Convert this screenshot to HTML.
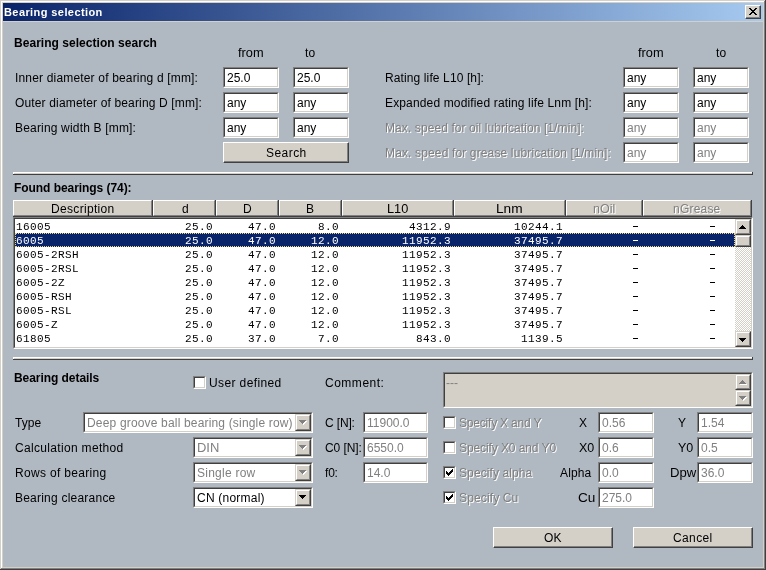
<!DOCTYPE html>
<html><head><meta charset="utf-8"><title>Bearing selection</title><style>
*{margin:0;padding:0;box-sizing:content-box}
html,body{width:766px;height:570px;overflow:hidden;background:#d4d0c8}
body{position:relative;font-family:"Liberation Sans",sans-serif}
body div, body svg{position:absolute}
.t,.b,.tv,.ht,.m,.title{filter:grayscale(1)}
.t{font-size:12px;line-height:14px;white-space:pre;color:#000}
.b{font-size:12px;line-height:14px;white-space:pre;color:#000;font-weight:bold}
.title{font-size:11px;line-height:14px;white-space:pre;color:#fff;font-weight:bold}
.dis{color:#808080 !important;text-shadow:1px 1px 0 #fff}
.dis2{color:#808080 !important}
.tv{font-size:12px;line-height:16px;white-space:pre;color:#000}
.sk{border-style:solid;border-width:1px;border-color:#808080 #fff #fff #808080}
.ski{position:relative !important;border-style:solid;border-width:1px;border-color:#404040 #d4d0c8 #d4d0c8 #404040}
.rs{border-style:solid;border-width:1px;border-color:#fff #404040 #404040 #fff;background:#d4d0c8}
.rsi{position:relative !important;border-style:solid;border-width:0 1px 1px 0;border-color:#808080}
.sb{border-style:solid;border-width:1px;border-color:#d4d0c8 #404040 #404040 #d4d0c8;background:#d4d0c8}
.sbi{position:relative !important;border-style:solid;border-width:1px;border-color:#fff #808080 #808080 #fff}
.hc{border-style:solid;border-width:1px 1px 1px 1px;border-color:#fff #808080 #808080 #fff;background:#d4d0c8}
.ht{font-size:12px;line-height:14px;white-space:pre;text-align:center;color:#000}
.vp{border-style:solid;border-width:2px 0 0 2px;border-color:#404040 transparent transparent #404040;background:#fff;box-shadow:1px 1px 0 #fff, inset -1px -1px 0 #d4d0c8}
.m{font-family:"Liberation Mono",monospace;font-size:11px;line-height:14px;letter-spacing:0.4px;white-space:pre;color:#000}
.m.sel{color:#fff}
.selrow{background:#0a246a;border:1px dotted #f0d878}
</style></head>
<body>
<div style="left:0px;top:0px;width:766px;height:570px;background:#d4d0c8"></div>
<div style="left:0px;top:569px;width:766px;height:1px;background:#404040"></div>
<div style="left:765px;top:0px;width:1px;height:570px;background:#404040"></div>
<div style="left:1px;top:568px;width:764px;height:1px;background:#808080"></div>
<div style="left:764px;top:1px;width:1px;height:568px;background:#808080"></div>
<div style="left:1px;top:1px;width:763px;height:1px;background:#fff"></div>
<div style="left:1px;top:1px;width:1px;height:567px;background:#fff"></div>
<div style="left:3px;top:3px;width:760px;height:18px;background:linear-gradient(to right,#0a246a,#a6caf0)"></div>
<div class="title" style="left:4.00px;top:5px;letter-spacing:0.414px;">Bearing selection</div>
<div class="rs" style="left:745px;top:5px;width:14px;height:12px;background:#d4d0c8"><div class="rsi" style="width:13px;height:11px;"></div></div>
<svg style="left:749px;top:8px" width="8" height="7" shape-rendering="crispEdges"><g fill="#000"><rect x="0" y="0" width="1" height="1"/><rect x="1" y="0" width="1" height="1"/><rect x="6" y="0" width="1" height="1"/><rect x="7" y="0" width="1" height="1"/><rect x="1" y="1" width="1" height="1"/><rect x="2" y="1" width="1" height="1"/><rect x="5" y="1" width="1" height="1"/><rect x="6" y="1" width="1" height="1"/><rect x="2" y="2" width="1" height="1"/><rect x="3" y="2" width="1" height="1"/><rect x="4" y="2" width="1" height="1"/><rect x="5" y="2" width="1" height="1"/><rect x="3" y="3" width="1" height="1"/><rect x="4" y="3" width="1" height="1"/><rect x="2" y="4" width="1" height="1"/><rect x="3" y="4" width="1" height="1"/><rect x="4" y="4" width="1" height="1"/><rect x="5" y="4" width="1" height="1"/><rect x="1" y="5" width="1" height="1"/><rect x="2" y="5" width="1" height="1"/><rect x="5" y="5" width="1" height="1"/><rect x="6" y="5" width="1" height="1"/><rect x="0" y="6" width="1" height="1"/><rect x="1" y="6" width="1" height="1"/><rect x="6" y="6" width="1" height="1"/><rect x="7" y="6" width="1" height="1"/></g></svg>
<div style="left:3px;top:22px;width:760px;height:545px;background:#b0b8c1"></div>
<div class="b" style="left:14.00px;top:36px;letter-spacing:0.038px;">Bearing selection search</div>
<div class="t" style="left:238.00px;top:46px;transform:scaleX(1.0665);transform-origin:0 0;">from</div>
<div class="t" style="left:305.00px;top:46px;letter-spacing:0.266px;">to</div>
<div class="t" style="left:638.00px;top:46px;transform:scaleX(1.0665);transform-origin:0 0;">from</div>
<div class="t" style="left:716.00px;top:46px;letter-spacing:0.266px;">to</div>
<div class="t" style="left:15.00px;top:71px;letter-spacing:0.172px;">Inner diameter of bearing d [mm]:</div>
<div class="sk" style="left:223px;top:67px;width:54px;height:19px;"><div class="ski" style="width:52px;height:17px;background:#fff"></div></div>
<div class="tv" style="left:227px;top:70px">25.0</div>
<div class="sk" style="left:293px;top:67px;width:54px;height:19px;"><div class="ski" style="width:52px;height:17px;background:#fff"></div></div>
<div class="tv" style="left:297px;top:70px">25.0</div>
<div class="t" style="left:15.00px;top:96px;letter-spacing:0.152px;">Outer diameter of bearing D [mm]:</div>
<div class="sk" style="left:223px;top:92px;width:54px;height:19px;"><div class="ski" style="width:52px;height:17px;background:#fff"></div></div>
<div class="tv" style="left:227px;top:95px">any</div>
<div class="sk" style="left:293px;top:92px;width:54px;height:19px;"><div class="ski" style="width:52px;height:17px;background:#fff"></div></div>
<div class="tv" style="left:297px;top:95px">any</div>
<div class="t" style="left:15.00px;top:121px;letter-spacing:0.178px;">Bearing width B [mm]:</div>
<div class="sk" style="left:223px;top:117px;width:54px;height:19px;"><div class="ski" style="width:52px;height:17px;background:#fff"></div></div>
<div class="tv" style="left:227px;top:120px">any</div>
<div class="sk" style="left:293px;top:117px;width:54px;height:19px;"><div class="ski" style="width:52px;height:17px;background:#fff"></div></div>
<div class="tv" style="left:297px;top:120px">any</div>
<div class="rs" style="left:223px;top:142px;width:124px;height:19px;"><div class="rsi" style="width:123px;height:18px;"></div></div>
<div class="t" style="left:266.00px;top:146px;letter-spacing:0.450px;">Search</div>
<div class="t" style="left:385.00px;top:71px;letter-spacing:0.116px;">Rating life L10 [h]:</div>
<div class="sk" style="left:623px;top:67px;width:54px;height:19px;"><div class="ski" style="width:52px;height:17px;background:#fff"></div></div>
<div class="tv" style="left:627px;top:70px">any</div>
<div class="sk" style="left:693px;top:67px;width:54px;height:19px;"><div class="ski" style="width:52px;height:17px;background:#fff"></div></div>
<div class="tv" style="left:697px;top:70px">any</div>
<div class="t" style="left:385.00px;top:96px;letter-spacing:0.148px;">Expanded modified rating life Lnm [h]:</div>
<div class="sk" style="left:623px;top:92px;width:54px;height:19px;"><div class="ski" style="width:52px;height:17px;background:#fff"></div></div>
<div class="tv" style="left:627px;top:95px">any</div>
<div class="sk" style="left:693px;top:92px;width:54px;height:19px;"><div class="ski" style="width:52px;height:17px;background:#fff"></div></div>
<div class="tv" style="left:697px;top:95px">any</div>
<div class="t dis" style="left:385.00px;top:121px;letter-spacing:0.092px;">Max. speed for oil lubrication [1/min]:</div>
<div class="sk" style="left:623px;top:117px;width:54px;height:19px;"><div class="ski" style="width:52px;height:17px;background:#fff"></div></div>
<div class="tv dis2" style="left:627px;top:120px">any</div>
<div class="sk" style="left:693px;top:117px;width:54px;height:19px;"><div class="ski" style="width:52px;height:17px;background:#fff"></div></div>
<div class="tv dis2" style="left:697px;top:120px">any</div>
<div class="t dis" style="left:385.00px;top:146px;letter-spacing:0.142px;">Max. speed for grease lubrication [1/min]:</div>
<div class="sk" style="left:623px;top:142px;width:54px;height:19px;"><div class="ski" style="width:52px;height:17px;background:#fff"></div></div>
<div class="tv dis2" style="left:627px;top:145px">any</div>
<div class="sk" style="left:693px;top:142px;width:54px;height:19px;"><div class="ski" style="width:52px;height:17px;background:#fff"></div></div>
<div class="tv dis2" style="left:697px;top:145px">any</div>
<div style="left:13px;top:172px;width:740px;height:3px;background:#404040"></div>
<div style="left:13px;top:172px;width:739px;height:2px;background:#d4d0c8"></div>
<div style="left:13px;top:172px;width:739px;height:1px;background:#fff"></div>
<div style="left:13px;top:172px;width:1px;height:2px;background:#fff"></div>
<div class="b" style="left:14.00px;top:181px;letter-spacing:-0.057px;">Found bearings (74):</div>
<div style="left:13px;top:200px;width:739px;height:17px;background:#404040"></div>
<div class="hc" style="left:13px;top:200px;width:137px;height:14px;"></div>
<div class="hc" style="left:153px;top:200px;width:60px;height:14px;"></div>
<div class="hc" style="left:216px;top:200px;width:60px;height:14px;"></div>
<div class="hc" style="left:279px;top:200px;width:60px;height:14px;"></div>
<div class="hc" style="left:342px;top:200px;width:109px;height:14px;"></div>
<div class="hc" style="left:454px;top:200px;width:109px;height:14px;"></div>
<div class="hc" style="left:566px;top:200px;width:74px;height:14px;"></div>
<div class="hc" style="left:643px;top:200px;width:106px;height:14px;"></div>
<div class="ht" style="left:51.00px;top:202px;letter-spacing:0.325px;">Description</div>
<div class="ht" style="left:182.00px;top:202px;letter-spacing:0.000px;">d</div>
<div class="ht" style="left:243.00px;top:202px;letter-spacing:0.000px;">D</div>
<div class="ht" style="left:306.00px;top:202px;letter-spacing:0.000px;">B</div>
<div class="ht" style="left:387.00px;top:202px;transform:scaleX(1.0615);transform-origin:0 0;">L10</div>
<div class="ht" style="left:496.00px;top:202px;transform:scaleX(1.1393);transform-origin:0 0;">Lnm</div>
<div class="ht dis" style="left:593.00px;top:202px;transform:scaleX(1.0448);transform-origin:0 0;">nOil</div>
<div class="ht dis" style="left:673.00px;top:202px;letter-spacing:0.208px;">nGrease</div>
<div class="sk" style="left:13px;top:217px;width:738px;height:130px;"><div class="ski" style="width:736px;height:128px;background:#fff"></div></div>
<div class="m" style="left:16px;top:220px">16005</div>
<div class="m" style="left:113px;top:220px;width:100px;text-align:right">25.0</div>
<div class="m" style="left:176px;top:220px;width:100px;text-align:right">47.0</div>
<div class="m" style="left:239px;top:220px;width:100px;text-align:right">8.0</div>
<div class="m" style="left:351px;top:220px;width:100px;text-align:right">4312.9</div>
<div class="m" style="left:463px;top:220px;width:100px;text-align:right">10244.1</div>
<div style="left:633px;top:226px;width:5px;height:1px;background:#000"></div>
<div style="left:710px;top:226px;width:5px;height:1px;background:#000"></div>
<div class="selrow" style="left:15px;top:233px;width:718px;height:12px;"></div>
<div class="m sel" style="left:16px;top:234px">6005</div>
<div class="m sel" style="left:113px;top:234px;width:100px;text-align:right">25.0</div>
<div class="m sel" style="left:176px;top:234px;width:100px;text-align:right">47.0</div>
<div class="m sel" style="left:239px;top:234px;width:100px;text-align:right">12.0</div>
<div class="m sel" style="left:351px;top:234px;width:100px;text-align:right">11952.3</div>
<div class="m sel" style="left:463px;top:234px;width:100px;text-align:right">37495.7</div>
<div style="left:633px;top:240px;width:5px;height:1px;background:#fff"></div>
<div style="left:710px;top:240px;width:5px;height:1px;background:#fff"></div>
<div class="m" style="left:16px;top:248px">6005-2RSH</div>
<div class="m" style="left:113px;top:248px;width:100px;text-align:right">25.0</div>
<div class="m" style="left:176px;top:248px;width:100px;text-align:right">47.0</div>
<div class="m" style="left:239px;top:248px;width:100px;text-align:right">12.0</div>
<div class="m" style="left:351px;top:248px;width:100px;text-align:right">11952.3</div>
<div class="m" style="left:463px;top:248px;width:100px;text-align:right">37495.7</div>
<div style="left:633px;top:254px;width:5px;height:1px;background:#000"></div>
<div style="left:710px;top:254px;width:5px;height:1px;background:#000"></div>
<div class="m" style="left:16px;top:262px">6005-2RSL</div>
<div class="m" style="left:113px;top:262px;width:100px;text-align:right">25.0</div>
<div class="m" style="left:176px;top:262px;width:100px;text-align:right">47.0</div>
<div class="m" style="left:239px;top:262px;width:100px;text-align:right">12.0</div>
<div class="m" style="left:351px;top:262px;width:100px;text-align:right">11952.3</div>
<div class="m" style="left:463px;top:262px;width:100px;text-align:right">37495.7</div>
<div style="left:633px;top:268px;width:5px;height:1px;background:#000"></div>
<div style="left:710px;top:268px;width:5px;height:1px;background:#000"></div>
<div class="m" style="left:16px;top:276px">6005-2Z</div>
<div class="m" style="left:113px;top:276px;width:100px;text-align:right">25.0</div>
<div class="m" style="left:176px;top:276px;width:100px;text-align:right">47.0</div>
<div class="m" style="left:239px;top:276px;width:100px;text-align:right">12.0</div>
<div class="m" style="left:351px;top:276px;width:100px;text-align:right">11952.3</div>
<div class="m" style="left:463px;top:276px;width:100px;text-align:right">37495.7</div>
<div style="left:633px;top:282px;width:5px;height:1px;background:#000"></div>
<div style="left:710px;top:282px;width:5px;height:1px;background:#000"></div>
<div class="m" style="left:16px;top:290px">6005-RSH</div>
<div class="m" style="left:113px;top:290px;width:100px;text-align:right">25.0</div>
<div class="m" style="left:176px;top:290px;width:100px;text-align:right">47.0</div>
<div class="m" style="left:239px;top:290px;width:100px;text-align:right">12.0</div>
<div class="m" style="left:351px;top:290px;width:100px;text-align:right">11952.3</div>
<div class="m" style="left:463px;top:290px;width:100px;text-align:right">37495.7</div>
<div style="left:633px;top:296px;width:5px;height:1px;background:#000"></div>
<div style="left:710px;top:296px;width:5px;height:1px;background:#000"></div>
<div class="m" style="left:16px;top:304px">6005-RSL</div>
<div class="m" style="left:113px;top:304px;width:100px;text-align:right">25.0</div>
<div class="m" style="left:176px;top:304px;width:100px;text-align:right">47.0</div>
<div class="m" style="left:239px;top:304px;width:100px;text-align:right">12.0</div>
<div class="m" style="left:351px;top:304px;width:100px;text-align:right">11952.3</div>
<div class="m" style="left:463px;top:304px;width:100px;text-align:right">37495.7</div>
<div style="left:633px;top:310px;width:5px;height:1px;background:#000"></div>
<div style="left:710px;top:310px;width:5px;height:1px;background:#000"></div>
<div class="m" style="left:16px;top:318px">6005-Z</div>
<div class="m" style="left:113px;top:318px;width:100px;text-align:right">25.0</div>
<div class="m" style="left:176px;top:318px;width:100px;text-align:right">47.0</div>
<div class="m" style="left:239px;top:318px;width:100px;text-align:right">12.0</div>
<div class="m" style="left:351px;top:318px;width:100px;text-align:right">11952.3</div>
<div class="m" style="left:463px;top:318px;width:100px;text-align:right">37495.7</div>
<div style="left:633px;top:324px;width:5px;height:1px;background:#000"></div>
<div style="left:710px;top:324px;width:5px;height:1px;background:#000"></div>
<div class="m" style="left:16px;top:332px">61805</div>
<div class="m" style="left:113px;top:332px;width:100px;text-align:right">25.0</div>
<div class="m" style="left:176px;top:332px;width:100px;text-align:right">37.0</div>
<div class="m" style="left:239px;top:332px;width:100px;text-align:right">7.0</div>
<div class="m" style="left:351px;top:332px;width:100px;text-align:right">843.0</div>
<div class="m" style="left:463px;top:332px;width:100px;text-align:right">1139.5</div>
<div style="left:633px;top:338px;width:5px;height:1px;background:#000"></div>
<div style="left:710px;top:338px;width:5px;height:1px;background:#000"></div>
<div style="left:735px;top:219px;width:16px;height:128px;background:repeating-conic-gradient(#d4d0c8 0 25%,#fff 0 50%) 0 0/2px 2px"></div>
<div class="sb" style="left:735px;top:219px;width:14px;height:14px;"><div class="sbi" style="width:12px;height:12px;"></div></div>
<svg style="left:739px;top:225px" width="9" height="6" shape-rendering="crispEdges"><g fill="#000"><rect x="3" y="0" width="1" height="1"/><rect x="2" y="1" width="3" height="1"/><rect x="1" y="2" width="5" height="1"/><rect x="0" y="3" width="7" height="1"/></g></svg>
<div class="sb" style="left:735px;top:235px;width:14px;height:10px;"><div class="sbi" style="width:12px;height:8px;"></div></div>
<div class="sb" style="left:735px;top:331px;width:14px;height:14px;"><div class="sbi" style="width:12px;height:12px;"></div></div>
<svg style="left:739px;top:338px" width="9" height="6" shape-rendering="crispEdges"><g fill="#000"><rect x="0" y="0" width="7" height="1"/><rect x="1" y="1" width="5" height="1"/><rect x="2" y="2" width="3" height="1"/><rect x="3" y="3" width="1" height="1"/></g></svg>
<div style="left:13px;top:357px;width:740px;height:3px;background:#404040"></div>
<div style="left:13px;top:357px;width:739px;height:2px;background:#d4d0c8"></div>
<div style="left:13px;top:357px;width:739px;height:1px;background:#fff"></div>
<div style="left:13px;top:357px;width:1px;height:2px;background:#fff"></div>
<div class="b" style="left:14.00px;top:371px;letter-spacing:-0.054px;">Bearing details</div>
<div class="sk" style="left:193px;top:376px;width:11px;height:11px;"><div class="ski" style="width:9px;height:9px;background:#fff"></div></div>
<div class="t" style="left:209.00px;top:376px;letter-spacing:0.385px;">User defined</div>
<div class="t" style="left:325.00px;top:376px;letter-spacing:0.512px;">Comment:</div>
<div class="sk" style="left:443px;top:372px;width:308px;height:34px;"><div class="ski" style="width:306px;height:32px;background:#d4d0c8"></div></div>
<div class="tv dis2" style="left:446px;top:375px">---</div>
<div class="sb" style="left:735px;top:374px;width:14px;height:14px;"><div class="sbi" style="width:12px;height:12px;"></div></div>
<svg style="left:739px;top:380px" width="9" height="6" shape-rendering="crispEdges"><g fill="#fff"><rect x="4" y="1" width="1" height="1"/><rect x="3" y="2" width="3" height="1"/><rect x="2" y="3" width="5" height="1"/><rect x="1" y="4" width="7" height="1"/></g><g fill="#808080"><rect x="3" y="0" width="1" height="1"/><rect x="2" y="1" width="3" height="1"/><rect x="1" y="2" width="5" height="1"/><rect x="0" y="3" width="7" height="1"/></g></svg>
<div class="sb" style="left:735px;top:390px;width:14px;height:14px;"><div class="sbi" style="width:12px;height:12px;"></div></div>
<svg style="left:739px;top:396px" width="9" height="6" shape-rendering="crispEdges"><g fill="#fff"><rect x="1" y="1" width="7" height="1"/><rect x="2" y="2" width="5" height="1"/><rect x="3" y="3" width="3" height="1"/><rect x="4" y="4" width="1" height="1"/></g><g fill="#808080"><rect x="0" y="0" width="7" height="1"/><rect x="1" y="1" width="5" height="1"/><rect x="2" y="2" width="3" height="1"/><rect x="3" y="3" width="1" height="1"/></g></svg>
<div class="t" style="left:15.00px;top:416px;letter-spacing:0.086px;">Type</div>
<div class="t" style="left:15.00px;top:441px;letter-spacing:0.326px;">Calculation method</div>
<div class="t" style="left:15.00px;top:466px;letter-spacing:0.326px;">Rows of bearing</div>
<div class="t" style="left:15.00px;top:491px;letter-spacing:0.222px;">Bearing clearance</div>
<div class="sk" style="left:83px;top:412px;width:228px;height:19px;"><div class="ski" style="width:226px;height:17px;background:#fff"></div></div>
<div class="sb" style="left:295px;top:414px;width:14px;height:15px;"><div class="sbi" style="width:12px;height:13px;"></div></div>
<svg style="left:299px;top:420px" width="9" height="6" shape-rendering="crispEdges"><g fill="#fff"><rect x="1" y="1" width="7" height="1"/><rect x="2" y="2" width="5" height="1"/><rect x="3" y="3" width="3" height="1"/><rect x="4" y="4" width="1" height="1"/></g><g fill="#808080"><rect x="0" y="0" width="7" height="1"/><rect x="1" y="1" width="5" height="1"/><rect x="2" y="2" width="3" height="1"/><rect x="3" y="3" width="1" height="1"/></g></svg>
<div class="tv dis2" style="left:87.00px;top:415px;letter-spacing:0.171px;">Deep groove ball bearing (single row)</div>
<div class="sk" style="left:193px;top:437px;width:118px;height:19px;"><div class="ski" style="width:116px;height:17px;background:#fff"></div></div>
<div class="sb" style="left:295px;top:439px;width:14px;height:15px;"><div class="sbi" style="width:12px;height:13px;"></div></div>
<svg style="left:299px;top:445px" width="9" height="6" shape-rendering="crispEdges"><g fill="#fff"><rect x="1" y="1" width="7" height="1"/><rect x="2" y="2" width="5" height="1"/><rect x="3" y="3" width="3" height="1"/><rect x="4" y="4" width="1" height="1"/></g><g fill="#808080"><rect x="0" y="0" width="7" height="1"/><rect x="1" y="1" width="5" height="1"/><rect x="2" y="2" width="3" height="1"/><rect x="3" y="3" width="1" height="1"/></g></svg>
<div class="tv dis2" style="left:197.00px;top:440px;transform:scaleX(1.0800);transform-origin:0 0;">DIN</div>
<div class="sk" style="left:193px;top:462px;width:118px;height:19px;"><div class="ski" style="width:116px;height:17px;background:#fff"></div></div>
<div class="sb" style="left:295px;top:464px;width:14px;height:15px;"><div class="sbi" style="width:12px;height:13px;"></div></div>
<svg style="left:299px;top:470px" width="9" height="6" shape-rendering="crispEdges"><g fill="#fff"><rect x="1" y="1" width="7" height="1"/><rect x="2" y="2" width="5" height="1"/><rect x="3" y="3" width="3" height="1"/><rect x="4" y="4" width="1" height="1"/></g><g fill="#808080"><rect x="0" y="0" width="7" height="1"/><rect x="1" y="1" width="5" height="1"/><rect x="2" y="2" width="3" height="1"/><rect x="3" y="3" width="1" height="1"/></g></svg>
<div class="tv dis2" style="left:197.00px;top:465px;letter-spacing:0.249px;">Single row</div>
<div class="sk" style="left:193px;top:487px;width:118px;height:19px;"><div class="ski" style="width:116px;height:17px;background:#fff"></div></div>
<div class="sb" style="left:295px;top:489px;width:14px;height:15px;"><div class="sbi" style="width:12px;height:13px;"></div></div>
<svg style="left:299px;top:495px" width="9" height="6" shape-rendering="crispEdges"><g fill="#000"><rect x="0" y="0" width="7" height="1"/><rect x="1" y="1" width="5" height="1"/><rect x="2" y="2" width="3" height="1"/><rect x="3" y="3" width="1" height="1"/></g></svg>
<div class="tv" style="left:197.00px;top:490px;letter-spacing:0.226px;">CN (normal)</div>
<div class="t" style="left:325.00px;top:416px;letter-spacing:-0.147px;">C [N]:</div>
<div class="sk" style="left:363px;top:412px;width:63px;height:19px;"><div class="ski" style="width:61px;height:17px;background:#fff"></div></div>
<div class="tv dis2" style="left:367px;top:415px">11900.0</div>
<div class="t" style="left:325.00px;top:441px;letter-spacing:-0.068px;">C0 [N]:</div>
<div class="sk" style="left:363px;top:437px;width:63px;height:19px;"><div class="ski" style="width:61px;height:17px;background:#fff"></div></div>
<div class="tv dis2" style="left:367px;top:440px">6550.0</div>
<div class="t" style="left:325.00px;top:466px;letter-spacing:-0.204px;">f0:</div>
<div class="sk" style="left:363px;top:462px;width:63px;height:19px;"><div class="ski" style="width:61px;height:17px;background:#fff"></div></div>
<div class="tv dis2" style="left:367px;top:465px">14.0</div>
<div class="sk" style="left:443px;top:416px;width:11px;height:11px;"><div class="ski" style="width:9px;height:9px;background:#fff"></div></div>
<div class="t dis" style="left:459.00px;top:416px;letter-spacing:-0.198px;">Specify X and Y</div>
<div class="sk" style="left:443px;top:441px;width:11px;height:11px;"><div class="ski" style="width:9px;height:9px;background:#fff"></div></div>
<div class="t dis" style="left:459.00px;top:441px;letter-spacing:-0.091px;">Specify X0 and Y0</div>
<div class="sk" style="left:443px;top:466px;width:11px;height:11px;"><div class="ski" style="width:9px;height:9px;background:#fff"></div></div>
<svg style="left:446px;top:469px" width="7" height="7" shape-rendering="crispEdges"><g fill="#000"><rect x="6" y="0" width="1" height="1"/><rect x="5" y="1" width="1" height="1"/><rect x="6" y="1" width="1" height="1"/><rect x="0" y="2" width="1" height="1"/><rect x="4" y="2" width="1" height="1"/><rect x="5" y="2" width="1" height="1"/><rect x="6" y="2" width="1" height="1"/><rect x="0" y="3" width="1" height="1"/><rect x="1" y="3" width="1" height="1"/><rect x="3" y="3" width="1" height="1"/><rect x="4" y="3" width="1" height="1"/><rect x="5" y="3" width="1" height="1"/><rect x="0" y="4" width="1" height="1"/><rect x="1" y="4" width="1" height="1"/><rect x="2" y="4" width="1" height="1"/><rect x="3" y="4" width="1" height="1"/><rect x="4" y="4" width="1" height="1"/><rect x="1" y="5" width="1" height="1"/><rect x="2" y="5" width="1" height="1"/><rect x="3" y="5" width="1" height="1"/><rect x="2" y="6" width="1" height="1"/></g></svg>
<div class="t dis" style="left:459.00px;top:466px;letter-spacing:0.102px;">Specify alpha</div>
<div class="sk" style="left:443px;top:491px;width:11px;height:11px;"><div class="ski" style="width:9px;height:9px;background:#fff"></div></div>
<svg style="left:446px;top:494px" width="7" height="7" shape-rendering="crispEdges"><g fill="#000"><rect x="6" y="0" width="1" height="1"/><rect x="5" y="1" width="1" height="1"/><rect x="6" y="1" width="1" height="1"/><rect x="0" y="2" width="1" height="1"/><rect x="4" y="2" width="1" height="1"/><rect x="5" y="2" width="1" height="1"/><rect x="6" y="2" width="1" height="1"/><rect x="0" y="3" width="1" height="1"/><rect x="1" y="3" width="1" height="1"/><rect x="3" y="3" width="1" height="1"/><rect x="4" y="3" width="1" height="1"/><rect x="5" y="3" width="1" height="1"/><rect x="0" y="4" width="1" height="1"/><rect x="1" y="4" width="1" height="1"/><rect x="2" y="4" width="1" height="1"/><rect x="3" y="4" width="1" height="1"/><rect x="4" y="4" width="1" height="1"/><rect x="1" y="5" width="1" height="1"/><rect x="2" y="5" width="1" height="1"/><rect x="3" y="5" width="1" height="1"/><rect x="2" y="6" width="1" height="1"/></g></svg>
<div class="t dis" style="left:459.00px;top:491px;letter-spacing:0.139px;">Specify Cu</div>
<div class="t" style="left:579.00px;top:416px;letter-spacing:0.000px;">X</div>
<div class="sk" style="left:598px;top:412px;width:54px;height:19px;"><div class="ski" style="width:52px;height:17px;background:#fff"></div></div>
<div class="tv dis2" style="left:602px;top:415px">0.56</div>
<div class="t" style="left:579.00px;top:441px;transform:scaleX(1.0397);transform-origin:0 0;">X0</div>
<div class="sk" style="left:598px;top:437px;width:54px;height:19px;"><div class="ski" style="width:52px;height:17px;background:#fff"></div></div>
<div class="tv dis2" style="left:602px;top:440px">0.6</div>
<div class="t" style="left:560.00px;top:466px;letter-spacing:0.146px;">Alpha</div>
<div class="sk" style="left:598px;top:462px;width:54px;height:19px;"><div class="ski" style="width:52px;height:17px;background:#fff"></div></div>
<div class="tv dis2" style="left:602px;top:465px">0.0</div>
<div class="t" style="left:578.00px;top:491px;transform:scaleX(1.1319);transform-origin:0 0;">Cu</div>
<div class="sk" style="left:598px;top:487px;width:54px;height:19px;"><div class="ski" style="width:52px;height:17px;background:#fff"></div></div>
<div class="tv dis2" style="left:602px;top:490px">275.0</div>
<div class="t" style="left:678.00px;top:416px;letter-spacing:0.000px;">Y</div>
<div class="sk" style="left:697px;top:412px;width:54px;height:19px;"><div class="ski" style="width:52px;height:17px;background:#fff"></div></div>
<div class="tv dis2" style="left:701px;top:415px">1.54</div>
<div class="t" style="left:678.00px;top:441px;transform:scaleX(1.0397);transform-origin:0 0;">Y0</div>
<div class="sk" style="left:697px;top:437px;width:54px;height:19px;"><div class="ski" style="width:52px;height:17px;background:#fff"></div></div>
<div class="tv dis2" style="left:701px;top:440px">0.5</div>
<div class="t" style="left:670.00px;top:466px;transform:scaleX(1.0929);transform-origin:0 0;">Dpw</div>
<div class="sk" style="left:697px;top:462px;width:54px;height:19px;"><div class="ski" style="width:52px;height:17px;background:#fff"></div></div>
<div class="tv dis2" style="left:701px;top:465px">36.0</div>
<div class="rs" style="left:493px;top:527px;width:118px;height:19px;"><div class="rsi" style="width:117px;height:18px;"></div></div>
<div class="t" style="left:544.00px;top:531px;letter-spacing:0.266px;">OK</div>
<div class="rs" style="left:633px;top:527px;width:118px;height:19px;"><div class="rsi" style="width:117px;height:18px;"></div></div>
<div class="t" style="left:673.00px;top:531px;letter-spacing:0.383px;">Cancel</div>
</body></html>
